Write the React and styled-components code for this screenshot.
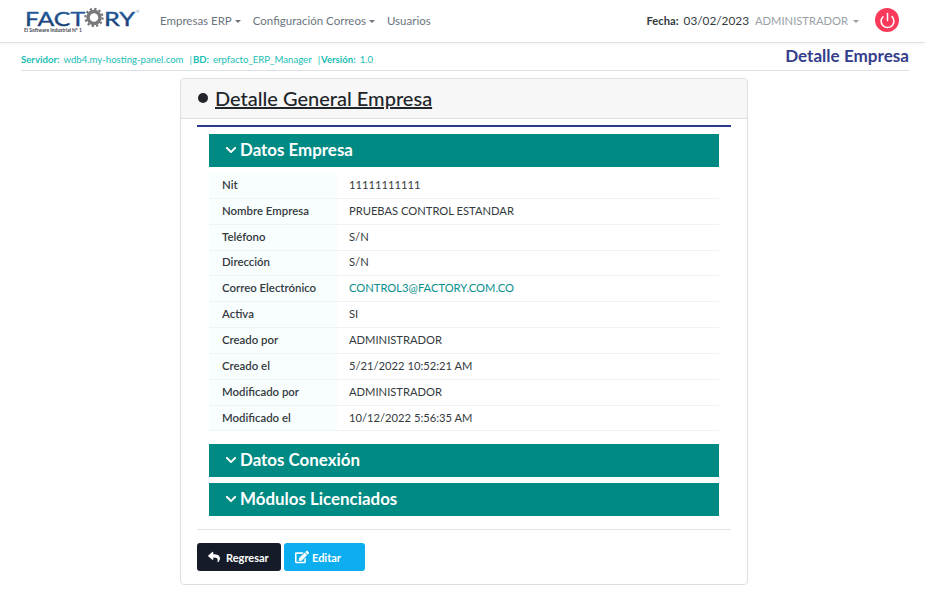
import styled, { createGlobalStyle } from "styled-components";
import { Power } from "lucide-react";
import { FaReply, FaEdit, FaChevronDown } from "react-icons/fa";

const GlobalStyle = createGlobalStyle`
  html, body {
    margin: 0;
    padding: 0;
    background: #fff;
    font-family: Lato, "Liberation Sans", sans-serif;
    font-size: 12px;
    color: #212529;
  }
  * { box-sizing: border-box; }
`;

const rows = [
  ["Nit", "11111111111"],
  ["Nombre Empresa", "PRUEBAS CONTROL ESTANDAR"],
  ["Teléfono", "S/N"],
  ["Dirección", "S/N"],
  ["Correo Electrónico", "CONTROL3@FACTORY.COM.CO", true],
  ["Activa", "SI"],
  ["Creado por", "ADMINISTRADOR"],
  ["Creado el", "5/21/2022 10:52:21 AM"],
  ["Modificado por", "ADMINISTRADOR"],
  ["Modificado el", "10/12/2022 5:56:35 AM"],
];

const Logo = () => (
  <svg width="122" height="34" viewBox="0 0 122 34">
    <defs>
      <linearGradient id="logoBlue" x1="0" y1="0" x2="0" y2="1">
        <stop offset="0" stopColor="#2a6db8" />
        <stop offset="1" stopColor="#14305c" />
      </linearGradient>
    </defs>
    <text x="1" y="22" fontFamily="Lato, sans-serif" fontSize="20" fontWeight="400" fill="url(#logoBlue)" stroke="#1f4f8f" strokeWidth="0.4" textLength="60" lengthAdjust="spacingAndGlyphs">FACT</text>
    <circle cx="70" cy="13.5" r="6" fill="none" stroke="#77787b" strokeWidth="3.4" />
    <circle cx="70" cy="13.5" r="8.6" fill="none" stroke="#77787b" strokeWidth="2.2" strokeDasharray="2.3 2.2" />
    <text x="80" y="22" fontFamily="Lato, sans-serif" fontSize="20" fontWeight="400" fill="url(#logoBlue)" stroke="#1f4f8f" strokeWidth="0.4" textLength="31" lengthAdjust="spacingAndGlyphs">RY</text>
    <text x="112" y="9" fontFamily="Lato, sans-serif" fontSize="4" fill="#3f6ea8">®</text>
    <text x="0" y="27.5" fontFamily="Lato, sans-serif" fontSize="5" fontWeight="700" fill="#44474d" textLength="58">El Software Industrial N° 1</text>
  </svg>
);

const App = () => (
  <>
    <GlobalStyle />
    <Navbar>
      <Brand><Logo /></Brand>
      <NavLink $caret>Empresas ERP</NavLink>
      <NavLink $caret>Configuración Correos</NavLink>
      <NavLink>Usuarios</NavLink>
      <NavRight>
        <DateLabel>Fecha:</DateLabel>
        <DateValue>03/02/2023</DateValue>
        <UserMenu $caret>ADMINISTRADOR</UserMenu>
        <PowerButton><Power size={17} strokeWidth={2.2} color="#fff" /></PowerButton>
      </NavRight>
    </Navbar>
    <InfoBar>
      <InfoText>
        <b>Servidor:</b><span>wdb4.my-hosting-panel.com</span>
        <Sep>|</Sep><b>BD:</b><span>erpfacto_ERP_Manager</span>
        <Sep>|</Sep><b>Versión:</b><span>1.0</span>
      </InfoText>
      <PageTitle>Detalle Empresa</PageTitle>
    </InfoBar>
    <Card>
      <CardHeader>
        <Dot />
        <CardTitle>Detalle General Empresa</CardTitle>
      </CardHeader>
      <CardBody>
        <BlueRule />
        <Sections>
          <SectionBar><FaChevronDown size={12} />Datos Empresa</SectionBar>
          <Table>
            {rows.map(([label, value, link]) => (
              <Row key={label}>
                <Label>{label}</Label>
                <Value $link={link}>{value}</Value>
              </Row>
            ))}
          </Table>
          <SectionBar $spaced><FaChevronDown size={12} />Datos Conexión</SectionBar>
          <SectionBar><FaChevronDown size={12} />Módulos Licenciados</SectionBar>
        </Sections>
        <Footer>
          <BackButton><FaReply size={12} />Regresar</BackButton>
          <EditButton><FaEdit size={14} />Editar</EditButton>
        </Footer>
      </CardBody>
    </Card>
  </>
);

const Navbar = styled.nav`
  height: 43px;
  display: flex;
  align-items: center;
  padding: 0 26px 2px 24px;
  background: #fff;
  border-bottom: 1px solid #dee2e6;
  box-shadow: 0 1px 4px rgba(0, 0, 0, 0.06);
`;

const Brand = styled.div`
  width: 130px;
  height: 34px;
  margin-top: 2px;
`;

const NavLink = styled.a`
  font-size: 11.5px;
  color: #6c757d;
  margin: 0 6px;
  white-space: nowrap;
  &::after {
    content: "";
    display: ${(p) => (p.$caret ? "inline-block" : "none")};
    margin-left: 3px;
    vertical-align: 2px;
    border-top: 3.5px solid currentColor;
    border-left: 3.5px solid transparent;
    border-right: 3.5px solid transparent;
  }
`;

const NavRight = styled.div`
  margin-left: auto;
  display: flex;
  align-items: center;
`;

const DateLabel = styled.span`
  font-size: 11.2px;
  font-weight: 700;
  color: #343a40;
  margin-right: 5px;
`;

const DateValue = styled.span`
  font-size: 11.8px;
  color: #343a40;
  margin-right: 6px;
`;

const UserMenu = styled(NavLink)`
  color: #999fa5;
  font-size: 11.2px;
  margin: 0 16px 0 0;
  &::after { margin-left: 5px; }
`;

const PowerButton = styled.div`
  width: 24px;
  height: 24px;
  border-radius: 50%;
  background: #fb3a5b;
  display: flex;
  align-items: center;
  justify-content: center;
`;

const InfoBar = styled.div`
  height: 28px;
  margin: 0 16px 0 21px;
  display: flex;
  align-items: center;
  justify-content: space-between;
  border-bottom: 1px solid #dee2e6;
`;

const InfoText = styled.div`
  font-size: 9.6px;
  color: #19bdb5;
  margin-top: 6px;
  white-space: nowrap;
  b { font-weight: 700; margin-right: 4px; }
`;

const Sep = styled.span`
  margin: 0 1px 0 6px;
`;

const PageTitle = styled.div`
  font-size: 17.1px;
  font-weight: 700;
  color: #353e8c;
  margin-top: -2px;
`;

const Card = styled.section`
  width: 568px;
  height: 507px;
  margin: 7px 0 0 180px;
  background: #fff;
  border: 1px solid #dfdfdf;
  border-radius: 4px;
`;

const CardHeader = styled.header`
  height: 40px;
  display: flex;
  align-items: center;
  padding: 0 0 1px 17px;
  background: #f7f7f7;
  border-bottom: 1px solid #dfdfdf;
  border-radius: 4px 4px 0 0;
`;

const Dot = styled.span`
  width: 10px;
  height: 10px;
  border-radius: 50%;
  background: #212529;
  margin-right: 7px;
`;

const CardTitle = styled.h3`
  margin: 0;
  font-size: 20px;
  font-weight: 500;
  color: #212529;
  text-decoration: underline;
`;

const CardBody = styled.div`
  padding: 6px 16px 0;
`;

const BlueRule = styled.div`
  height: 2px;
  background: #2a3a8c;
`;

const Sections = styled.div`
  padding: 7px 12px 13px;
  border-bottom: 1px solid #e4e4e4;
`;

const SectionBar = styled.div`
  height: 33px;
  margin-top: ${(p) => (p.$spaced ? "13px" : "0")};
  margin-bottom: 6px;
  display: flex;
  align-items: center;
  gap: 3px;
  padding: 0 0 2px 16px;
  background: #008a84;
  color: #fff;
  font-size: 16.9px;
  font-weight: 700;
  &:last-child { margin-bottom: 0; }
`;

const Table = styled.div`
  display: flex;
  flex-direction: column;
  margin-top: 5px;
`;

const Row = styled.div`
  height: 25.85px;
  display: grid;
  grid-template-columns: 128px 1fr;
  align-items: center;
  padding-bottom: 2px;
  border-bottom: 1px solid #f0f3f3;
  background: linear-gradient(90deg, #f8fefe 0, #f8fefe 128px, #fff 128px);
`;

const Label = styled.div`
  padding-left: 13px;
  font-size: 11.4px;
  font-weight: 600;
  color: #343a40;
`;

const Value = styled.div`
  padding-left: 12px;
  font-size: 11.2px;
  color: ${(p) => (p.$link ? "#078f8b" : "#343a40")};
`;

const Footer = styled.div`
  display: flex;
  gap: 3px;
  padding-top: 13px;
`;

const BackButton = styled.button`
  width: 84px;
  height: 28px;
  border: none;
  border-radius: 3px;
  background: #151b28;
  color: #fff;
  font-family: inherit;
  font-size: 11px;
  font-weight: 700;
  display: flex;
  align-items: center;
  gap: 6px;
  padding: 0 0 0 11px;
`;

const EditButton = styled(BackButton)`
  width: 81px;
  gap: 3px;
  background: #0caeef;
`;

export default App;
